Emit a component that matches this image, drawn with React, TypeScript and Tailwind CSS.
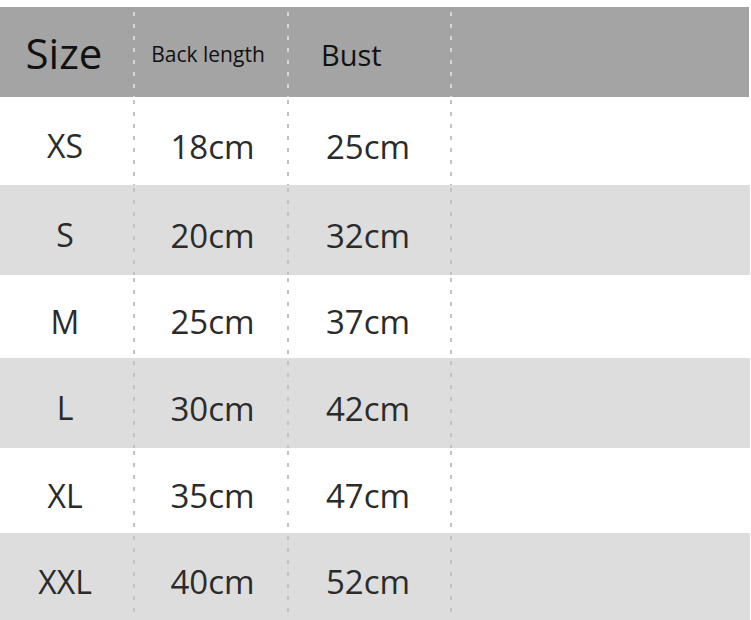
import React from "react";

const rows = [
  { size: "XS", back: "18cm", bust: "25cm", bg: "bg-white", h: "h-[88px]" },
  { size: "S", back: "20cm", bust: "32cm", bg: "bg-[#dcdddc]", h: "h-[90px]" },
  { size: "M", back: "25cm", bust: "37cm", bg: "bg-white", h: "h-[83px]" },
  { size: "L", back: "30cm", bust: "42cm", bg: "bg-[#dcdddc]", h: "h-[90px]" },
  { size: "XL", back: "35cm", bust: "47cm", bg: "bg-white", h: "h-[85px]" },
  { size: "XXL", back: "40cm", bust: "52cm", bg: "bg-[#dcdddc]", h: "h-[87px]" },
];

function Sep({ light }: { light?: boolean }) {
  return light ? (
    <div className="w-[2px] self-stretch shrink-0 bg-[repeating-linear-gradient(to_bottom,transparent_0px,transparent_5px,#d6d6d6_5px,#d6d6d6_9px,transparent_9px,transparent_12px)]" />
  ) : (
    <div className="w-[2px] self-stretch shrink-0 bg-[repeating-linear-gradient(to_bottom,transparent_0px,transparent_3px,#c2c2c2_3px,#c2c2c2_7px,transparent_7px,transparent_12px)]" />
  );
}

export default function App() {
  return (
    <div
      className="w-[751px] h-[620px] bg-white overflow-hidden pt-[7px]"
      style={{ fontFamily: '"Open Sans", "Noto Sans", sans-serif' }}
    >
      <div className="flex h-[90px] w-[749px] bg-[#a4a4a4] text-[#111]">
        <div className="w-[133px] flex items-center justify-center pt-[2px] text-[42px] leading-none">
          <span className="-ml-[5px]">Size</span>
        </div>
        <Sep light />
        <div className="w-[152px] flex items-center justify-center pt-[4px] text-[21px] leading-none">
          <span className="-ml-[6px]">Back length</span>
        </div>
        <Sep light />
        <div className="w-[161px] flex items-center pl-[32px] pt-[4px] text-[29px] leading-none">
          Bust
        </div>
        <Sep light />
        <div className="flex-1" />
      </div>
      {rows.map((r) => (
        <div key={r.size} className={`flex ${r.h} w-[750px] ${r.bg} text-[#2b2b2b]`}>
          <div className="w-[133px] flex items-center justify-center pt-[10px] text-[32px] leading-none">
            <span className="-ml-[3px]">{r.size}</span>
          </div>
          <Sep />
          <div className="w-[152px] flex items-center justify-center pt-[10px] text-[33px] leading-none">
            <span className="ml-[3px]">{r.back}</span>
          </div>
          <Sep />
          <div className="w-[161px] flex items-center justify-center pt-[10px] text-[33px] leading-none">
            <span className="-ml-[3px]">{r.bust}</span>
          </div>
          <Sep />
          <div className="flex-1" />
        </div>
      ))}
    </div>
  );
}
